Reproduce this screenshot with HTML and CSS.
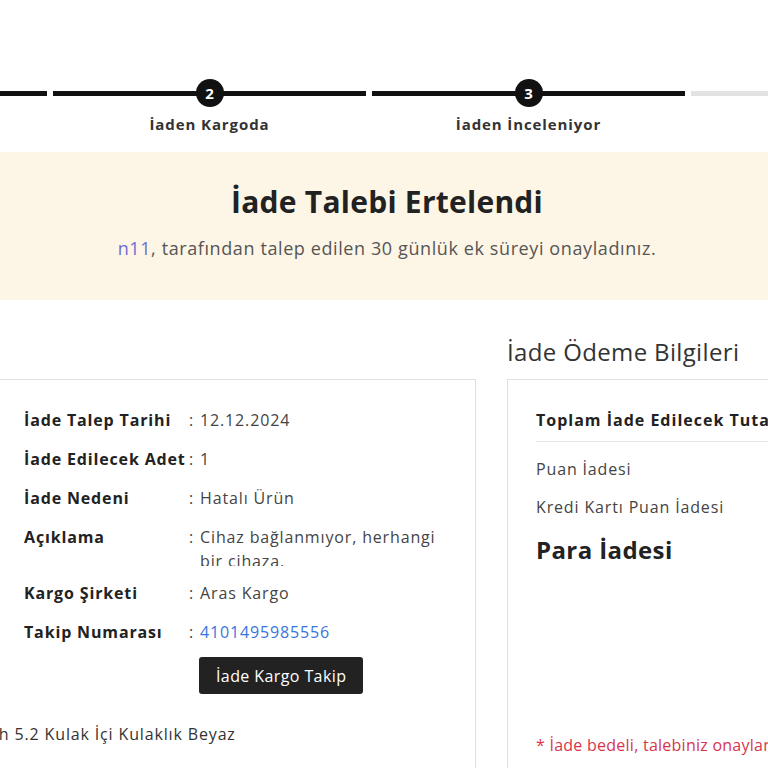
FILE: index.html
```html
<!DOCTYPE html>
<html lang="tr">
<head>
<meta charset="utf-8">
<title>İade Detayı</title>
<link rel="stylesheet" href="styles.css">
</head>
<body>
<div class="page">
  <ol class="steps">
    <li class="step">
      <div class="track"><span class="dot">1</span></div>
      <span class="step-label">İade Talebi</span>
    </li>
    <li class="step">
      <div class="track"><span class="dot">2</span></div>
      <span class="step-label">İaden Kargoda</span>
    </li>
    <li class="step">
      <div class="track"><span class="dot">3</span></div>
      <span class="step-label">İaden İnceleniyor</span>
    </li>
    <li class="step todo">
      <div class="track"><span class="dot">4</span></div>
      <span class="step-label">İade Tamamlandı</span>
    </li>
  </ol>

  <section class="notice">
    <h1 class="notice-title">İade Talebi Ertelendi</h1>
    <p class="notice-text"><a class="brand" href="#">n11</a>, tarafından talep edilen 30 günlük ek süreyi onayladınız.</p>
  </section>

  <div class="columns">
    <section class="col">
      <h2 class="col-title">İade Detayı</h2>
      <div class="card">
        <div class="detail-top">
          <div class="thumb"></div>
          <div class="details">
            <dl class="info">
              <div class="info-row"><dt>İade Talep Tarihi</dt><span class="colon">:</span><dd>12.12.2024</dd></div>
              <div class="info-row"><dt>İade Edilecek Adet</dt><span class="colon">:</span><dd>1</dd></div>
              <div class="info-row"><dt>İade Nedeni</dt><span class="colon">:</span><dd>Hatalı Ürün</dd></div>
              <div class="info-row"><dt>Açıklama</dt><span class="colon">:</span><dd class="clamp">Cihaz bağlanmıyor, herhangi bir cihaza.</dd></div>
              <div class="info-row"><dt>Kargo Şirketi</dt><span class="colon">:</span><dd>Aras Kargo</dd></div>
              <div class="info-row"><dt>Takip Numarası</dt><span class="colon">:</span><dd><a class="link" href="#">4101495985556</a></dd></div>
            </dl>
            <div class="actions">
              <button class="track-btn" type="button">İade Kargo Takip</button>
            </div>
          </div>
        </div>
        <p class="product-name">Kablosuz Şarjlı TWS Bluetooth 5.2 Kulak İçi Kulaklık Beyaz</p>
      </div>
    </section>

    <section class="col">
      <h2 class="col-title">İade Ödeme Bilgileri</h2>
      <div class="card">
        <div class="pay-head"><span>Toplam İade Edilecek Tutar</span><span>349,90 TL</span></div>
        <div class="pay-row"><span>Puan İadesi</span><span>0,00 TL</span></div>
        <div class="pay-row tight"><span>Kredi Kartı Puan İadesi</span><span>0,00 TL</span></div>
        <div class="para">Para İadesi</div>
        <p class="note">* İade bedeli, talebiniz onaylandıktan sonra hesabınıza aktarılır.</p>
      </div>
    </section>
  </div>
</div>
</body>
</html>
```

FILE: styles.css
```css
html, body {
  margin: 0;
  padding: 0;
}

body {
  overflow: hidden;
  background: #fff;
  color: #333;
  font-family: "Open Sans", "Noto Sans", sans-serif;
  font-size: 16px;
  letter-spacing: 0.85px;
}

/* the page is scrolled sideways inside the window */
.page {
  width: 1306px;
  margin-left: -266px;
}

/* progress steps */
.steps {
  list-style: none;
  margin: 0;
  padding: 79px 0 0;
  display: grid;
  grid-template-columns: repeat(4, 313px);
  column-gap: 6px;
}

.step {
  display: flex;
  flex-direction: column;
  align-items: center;
}

.track {
  align-self: stretch;
  height: 28px;
  display: flex;
  justify-content: center;
  background: linear-gradient(#111, #111) center / 100% 5px no-repeat;
}

.step.todo .track {
  background-image: linear-gradient(#e2e2e2, #e2e2e2);
}

.dot {
  width: 28px;
  height: 28px;
  border-radius: 50%;
  background: #111;
  color: #fff;
  font-size: 15px;
  font-weight: 700;
  line-height: 28px;
  letter-spacing: 0;
  text-align: center;
}

.step.todo .dot {
  background: #e2e2e2;
}

.step-label {
  margin-top: 7px;
  font-size: 15px;
  font-weight: 700;
  line-height: 20px;
  letter-spacing: 0.9px;
  color: #333;
}

/* postponed notice */
.notice {
  margin-top: 18px;
  padding: 30px 0 39px;
  background: #fdf6e6;
  text-align: center;
}

.notice-title {
  margin: 0;
  font-size: 30px;
  line-height: 40px;
  font-weight: 700;
  letter-spacing: 0.25px;
  color: #222;
}

.notice-text {
  margin: 13px 0 0;
  font-size: 18px;
  line-height: 26px;
  letter-spacing: 0.6px;
  color: #555;
}

.brand {
  color: #6b6fd5;
  text-decoration: none;
}

/* two columns */
.columns {
  display: grid;
  grid-template-columns: 742px 533px;
  column-gap: 31px;
  margin-top: 36px;
}

.col-title {
  margin: 0 0 11px;
  font-size: 24px;
  line-height: 32px;
  font-weight: 400;
  letter-spacing: 0.35px;
  color: #333;
}

.card {
  border: 1px solid #e1e1e1;
  padding: 28px;
}

/* return details */
.detail-top {
  display: grid;
  grid-template-columns: 230px 1fr;
  column-gap: 31px;
}

.thumb {
  height: 140px;
  background: #f6f6f6;
}

.info {
  margin: 0;
}

.info-row {
  display: grid;
  grid-template-columns: 165px auto 1fr;
  line-height: 24px;
  margin-bottom: 15px;
}

.info-row:last-child {
  margin-bottom: 13px;
}

.info-row dt {
  font-weight: 700;
  color: #222;
  white-space: nowrap;
}

.colon {
  margin-right: 6px;
  color: #444;
}

.info-row dd {
  margin: 0;
  color: #444;
}

.clamp {
  max-height: 41px;
  overflow: hidden;
}

.link {
  color: #3b74db;
  text-decoration: none;
}

.actions {
  padding-left: 175px;
}

.track-btn {
  height: 37px;
  padding: 0 17px;
  border: none;
  border-radius: 3px;
  background: #222;
  color: #fff;
  font-family: inherit;
  font-size: 16px;
  letter-spacing: 0.4px;
  cursor: pointer;
}

.product-name {
  margin: 28px 0 0;
  line-height: 24px;
  color: #333;
  white-space: nowrap;
}

/* payment info */
.pay-head,
.pay-row {
  display: flex;
  justify-content: space-between;
  line-height: 24px;
}

.pay-head {
  padding-bottom: 9px;
  border-bottom: 1px solid #e6e6e6;
  font-weight: 700;
  letter-spacing: 1px;
  color: #222;
}

.pay-row {
  margin-top: 15px;
  color: #444;
}

.pay-row.tight {
  margin-top: 14px;
}

.para {
  margin-top: 15px;
  font-size: 24px;
  line-height: 32px;
  font-weight: 700;
  letter-spacing: 0.4px;
  color: #222;
}

.note {
  margin: 167px 0 0;
  line-height: 24px;
  letter-spacing: 0.25px;
  white-space: nowrap;
  color: #d8354d;
}
```
